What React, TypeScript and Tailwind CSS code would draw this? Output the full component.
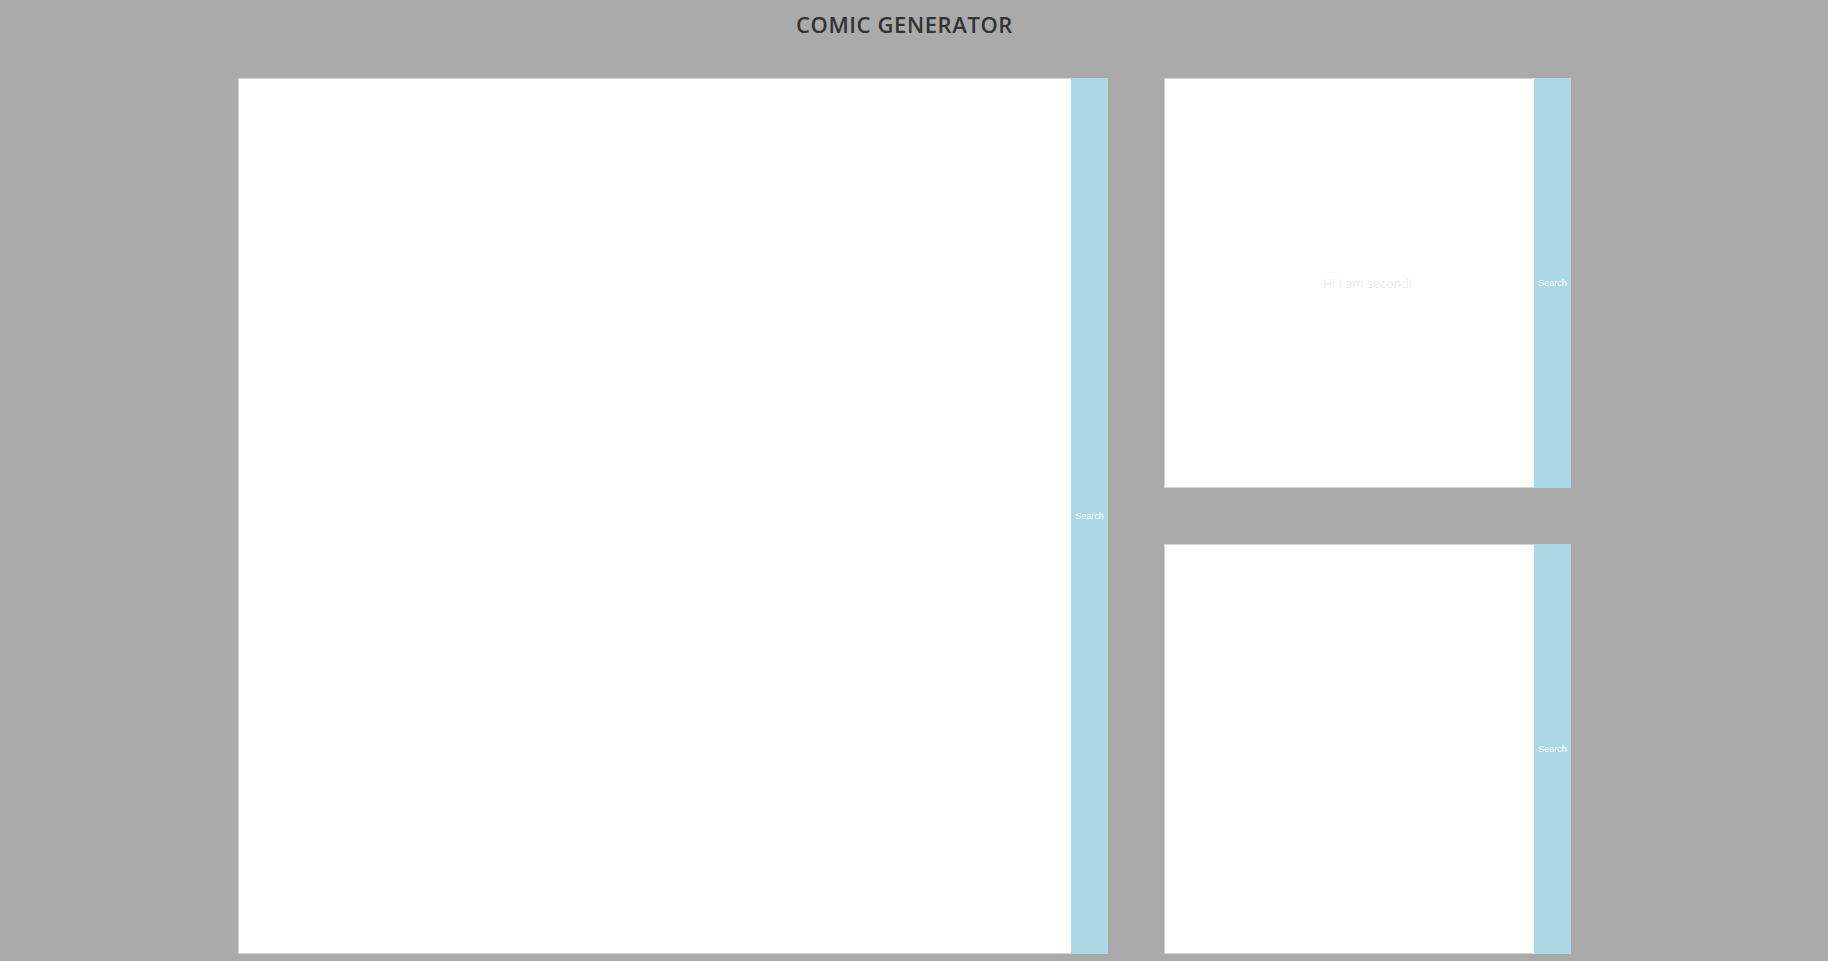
import React from "react";

function Panel({ className, text }: { className: string; text?: string }) {
  return (
    <div className={`relative flex ${className}`}>
      <div className="flex-1 bg-white border border-[#d4d4d4] border-r-0" />
      <button className="w-[37px] pt-[2px] bg-[#add8e6] text-white text-[9px] flex items-center justify-center" style={{ fontFamily: '"Liberation Sans", Arial, sans-serif' }}>
        Search
      </button>
      {text && (
        <div className="absolute inset-0 flex items-center justify-center pointer-events-none pt-[2px]">
          <span className="text-[#ececec] text-[12.5px]" style={{ fontFamily: '"Open Sans", sans-serif' }}>{text}</span>
        </div>
      )}
    </div>
  );
}

export default function App() {
  return (
    <div className="min-h-screen w-full bg-[#aaaaaa] overflow-hidden">
      <div className="ml-[238px] w-[1333px]">
        <h1
          className="pt-[9px] text-center text-[22px] leading-[30px] font-semibold tracking-[0.6px] text-[#333333]"
          style={{ fontFamily: '"Open Sans", sans-serif' }}
        >
          COMIC GENERATOR
        </h1>
        <div className="mt-[39px] flex gap-[56px]">
          <Panel className="w-[870px] h-[876px]" />
          <div className="w-[407px] flex flex-col gap-[56px]">
            <Panel className="h-[410px]" text="Hi I am second!" />
            <Panel className="h-[410px]" />
          </div>
        </div>
      </div>
    </div>
  );
}
